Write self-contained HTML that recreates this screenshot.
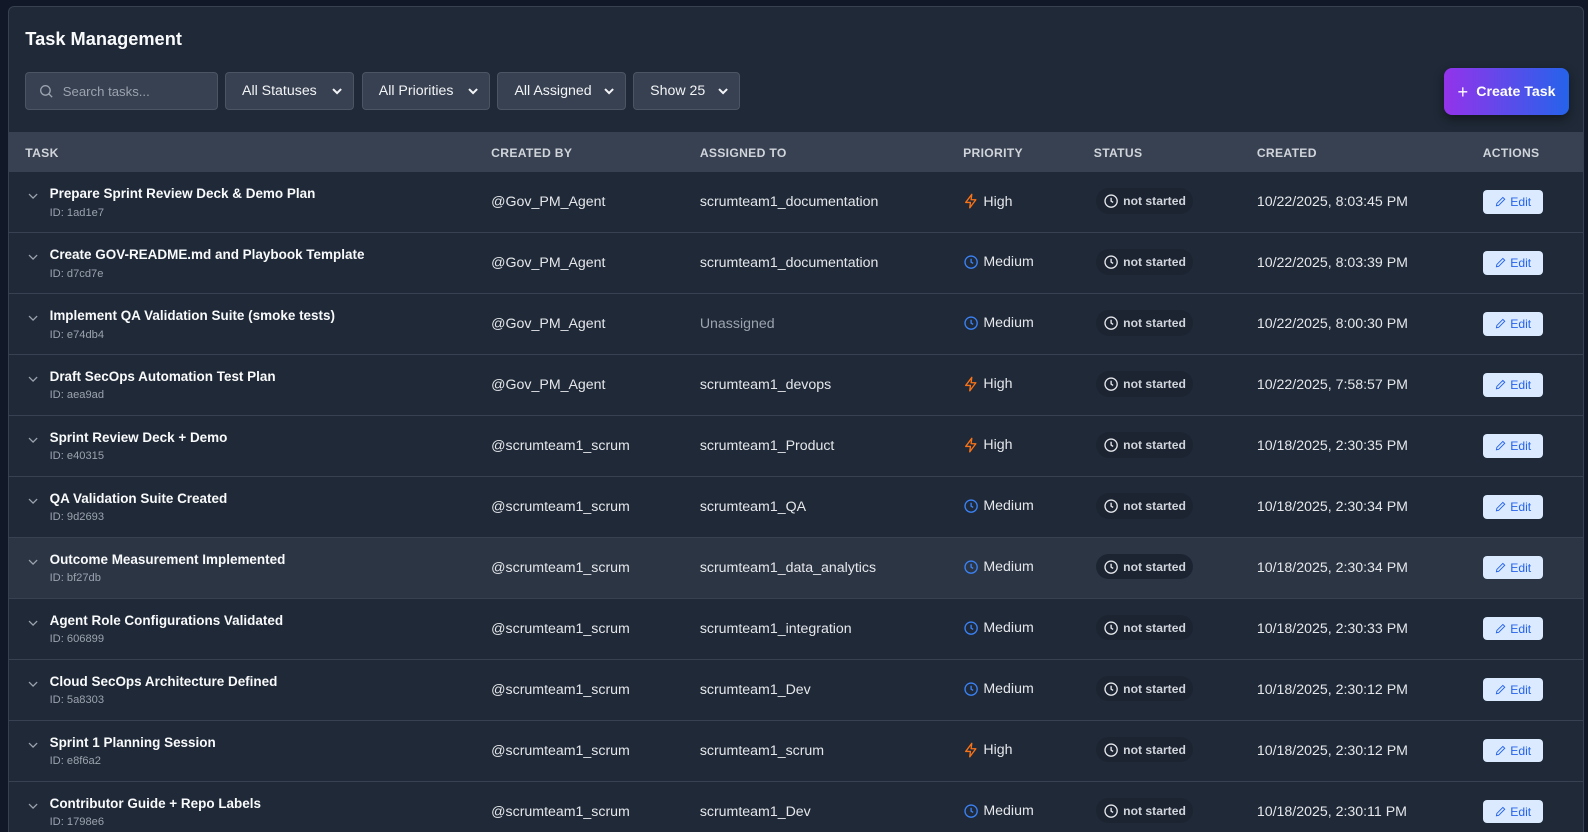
<!DOCTYPE html>
<html><head><meta charset="utf-8"><style>
*{box-sizing:border-box;margin:0;padding:0}
html{overflow:hidden;width:1588px;height:832px}
body{width:1588px;height:832px;overflow:hidden;background:#111827;font-family:"Liberation Sans",sans-serif;color:#e5e7eb;position:relative}
.card{position:absolute;left:8px;top:6px;width:1556px;height:818px;background:#1f2937;border:1px solid #374151;border-bottom:none;border-radius:6px 6px 0 0;overflow:hidden;zoom:1.0128}
h1{position:absolute;left:16px;top:21px;font-size:18px;font-weight:bold;color:#f9fafb}
.ctl{position:absolute;top:64px;height:38px;background:#374151;border:1px solid #4b5563;border-radius:4px;font-size:14px;color:#f3f4f6;display:flex;align-items:center;padding-left:16px}
.ctl .car{position:absolute;right:10px;top:12px}
.btn{position:absolute;left:1417px;top:60px;width:123px;height:47px;border-radius:8px;background:linear-gradient(90deg,#9333ea,#2563eb);color:#fff;font-size:14px;font-weight:bold;display:flex;align-items:center;justify-content:center;box-shadow:0 4px 10px rgba(0,0,0,.4)}
.thead{position:absolute;left:0;top:123px;width:1556px;height:40px;background:#374151}
.th{position:absolute;top:14px;font-size:12px;font-weight:bold;color:#d1d5db;letter-spacing:.3px}
.row{position:absolute;left:0;width:1556px;height:60px;border-bottom:1px solid #374151;font-size:14px;color:#e5e7eb}
.row.h{background:#2b3544}
.c{position:absolute;top:22px;white-space:nowrap}
.tt{position:absolute;left:40px;top:14px;font-weight:bold;font-size:13.3px;color:#f9fafb}
.id{position:absolute;left:40px;top:34px;font-size:11px;color:#9ca3af}
.chev{position:absolute;left:18px;top:18px}
.badge{position:absolute;left:1073px;top:16px;height:25px;width:96px;border-radius:13px;background:#1c2432;display:flex;align-items:center;padding-left:7px;font-size:12px;font-weight:bold;color:#d1d5db;gap:4px}
.edit{position:absolute;left:1455px;top:18px;width:60px;height:23px;background:#dbeafe;border-radius:4px;color:#2563eb;font-size:12px;display:flex;align-items:center;justify-content:center;gap:4px}
.pr{position:absolute;left:942px;top:21px;display:flex;align-items:center;gap:4px}
</style></head><body>
<div class="card">
<h1>Task Management</h1>
<div class="ctl" style="left:16px;width:190px;color:#9ca3af;padding-left:12px"><svg width="16" height="16" viewBox="0 0 24 24" fill="none" stroke="#9ca3af" stroke-width="2"><circle cx="11" cy="11" r="7"/><path d="M21 21l-5-5"/></svg><span style="margin-left:8px;font-size:13px">Search tasks...</span></div>
<div class="ctl" style="left:213px;width:128px">All Statuses<svg class="car" width="12" height="12" viewBox="0 0 12 12"><path d="M2 4l4 4 4-4" stroke="#f3f4f6" stroke-width="2" fill="none"/></svg></div>
<div class="ctl" style="left:348px;width:127px">All Priorities<svg class="car" width="12" height="12" viewBox="0 0 12 12"><path d="M2 4l4 4 4-4" stroke="#f3f4f6" stroke-width="2" fill="none"/></svg></div>
<div class="ctl" style="left:482px;width:127px">All Assigned<svg class="car" width="12" height="12" viewBox="0 0 12 12"><path d="M2 4l4 4 4-4" stroke="#f3f4f6" stroke-width="2" fill="none"/></svg></div>
<div class="ctl" style="left:616px;width:106px">Show 25<svg class="car" width="12" height="12" viewBox="0 0 12 12"><path d="M2 4l4 4 4-4" stroke="#f3f4f6" stroke-width="2" fill="none"/></svg></div>
<div class="btn"><span style="font-size:18px;margin-right:8px;font-weight:normal">+</span>Create Task</div>
<div class="thead">
<div class="th" style="left:16px">TASK</div><div class="th" style="left:476px">CREATED BY</div><div class="th" style="left:682px">ASSIGNED TO</div><div class="th" style="left:942px">PRIORITY</div><div class="th" style="left:1071px">STATUS</div><div class="th" style="left:1232px">CREATED</div><div class="th" style="left:1455px">ACTIONS</div>
</div>
<div id="rows"></div>
</div>
<script>
var d=[["Prepare Sprint Review Deck & Demo Plan","1ad1e7","@Gov_PM_Agent","scrumteam1_documentation",1,"10/22/2025, 8:03:45 PM"],
["Create GOV-README.md and Playbook Template","d7cd7e","@Gov_PM_Agent","scrumteam1_documentation",0,"10/22/2025, 8:03:39 PM"],
["Implement QA Validation Suite (smoke tests)","e74db4","@Gov_PM_Agent","Unassigned",0,"10/22/2025, 8:00:30 PM"],
["Draft SecOps Automation Test Plan","aea9ad","@Gov_PM_Agent","scrumteam1_devops",1,"10/22/2025, 7:58:57 PM"],
["Sprint Review Deck + Demo","e40315","@scrumteam1_scrum","scrumteam1_Product",1,"10/18/2025, 2:30:35 PM"],
["QA Validation Suite Created","9d2693","@scrumteam1_scrum","scrumteam1_QA",0,"10/18/2025, 2:30:34 PM"],
["Outcome Measurement Implemented","bf27db","@scrumteam1_scrum","scrumteam1_data_analytics",0,"10/18/2025, 2:30:34 PM"],
["Agent Role Configurations Validated","606899","@scrumteam1_scrum","scrumteam1_integration",0,"10/18/2025, 2:30:33 PM"],
["Cloud SecOps Architecture Defined","5a8303","@scrumteam1_scrum","scrumteam1_Dev",0,"10/18/2025, 2:30:12 PM"],
["Sprint 1 Planning Session","e8f6a2","@scrumteam1_scrum","scrumteam1_scrum",1,"10/18/2025, 2:30:12 PM"],
["Contributor Guide + Repo Labels","1798e6","@scrumteam1_scrum","scrumteam1_Dev",0,"10/18/2025, 2:30:11 PM"]];
var h="";
var clk='<svg width="16" height="16" viewBox="0 0 24 24" fill="none" stroke="COL" stroke-width="2"><circle cx="12" cy="12" r="9"/><path d="M12 7v5l3 2"/></svg>';
var bolt='<svg width="16" height="16" viewBox="0 0 24 24" fill="none" stroke="#f97316" stroke-width="2" stroke-linejoin="round"><path d="M13 2L4 14h7l-1 8 9-12h-7z"/></svg>';
d.forEach(function(r,i){
h+='<div class="row'+(i==6?' h':'')+'" style="top:'+(163+i*60.2)+'px">'+
'<svg class="chev" width="12" height="12" viewBox="0 0 12 12"><path d="M2 4l4 4 4-4" stroke="#9ca3af" stroke-width="1.3" fill="none"/></svg>'+
'<div class="tt">'+r[0].replace("&","&amp;")+'</div><div class="id">ID: '+r[1]+'</div>'+
'<div class="c" style="left:476px">'+r[2]+'</div>'+
'<div class="c" style="left:682px;'+(r[3]=="Unassigned"?"color:#9ca3af":"")+'">'+r[3]+'</div>'+
'<div class="pr">'+(r[4]?bolt+'<span>High</span>':clk.replace("COL","#3b82f6")+'<span>Medium</span>')+'</div>'+
'<div class="badge">'+clk.replace("COL","#e5e7eb")+'not started</div>'+
'<div class="c" style="left:1232px">'+r[5]+'</div>'+
'<div class="edit"><svg width="11" height="11" viewBox="0 0 24 24" fill="none" stroke="#2563eb" stroke-width="2"><path d="M17 3l4 4L8 20l-5 1 1-5z"/></svg>Edit</div></div>';
});
document.getElementById("rows").innerHTML=h;
</script>
</body></html>
